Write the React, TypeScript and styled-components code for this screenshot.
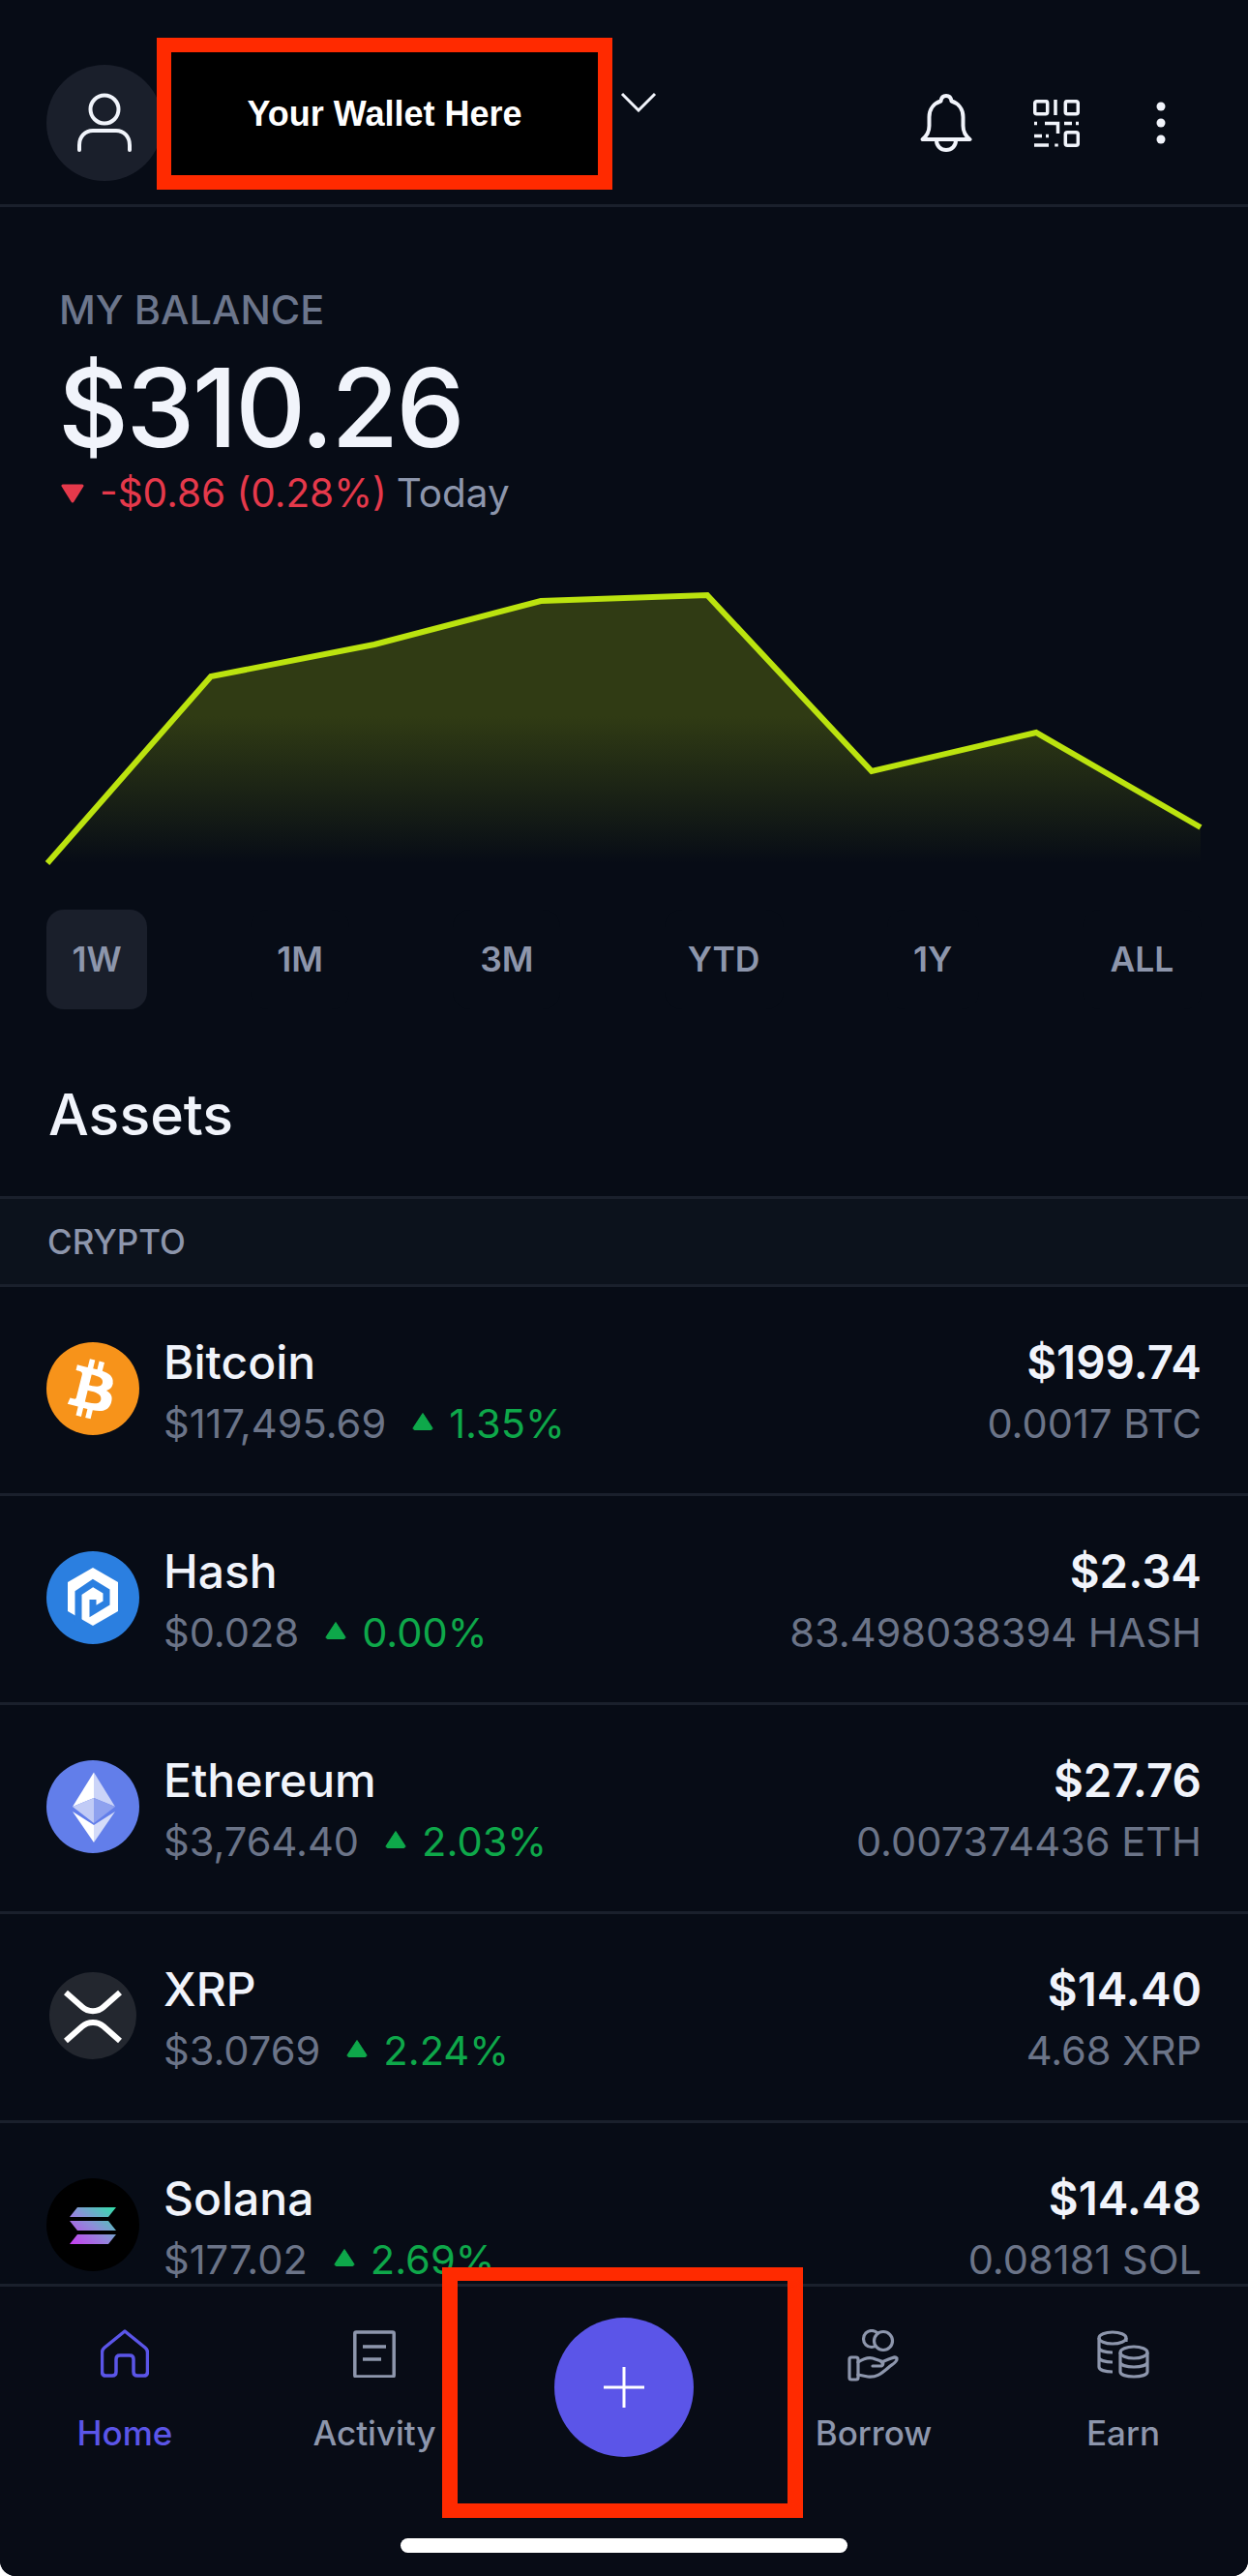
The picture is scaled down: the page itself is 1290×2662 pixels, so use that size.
import React from "react";
import styled, { createGlobalStyle } from "styled-components";

const Global = createGlobalStyle`
  html, body { margin: 0; padding: 0; background: #fff; }
  * { box-sizing: border-box; }
`;

const Screen = styled.div`
  position: relative;
  width: 1290px;
  height: 2662px;
  display: flex;
  flex-direction: column;
  overflow: hidden;
  background: #070c16;
  border-radius: 0 0 16px 16px;
  font-family: Inter, "Liberation Sans", sans-serif;
  color: #f1f4fb;
`;

const Header = styled.header`
  flex: none;
  height: 214px;
  padding: 67px 48px 0;
  display: flex;
  align-items: flex-start;
  border-bottom: 3px solid #1a202c;
`;

const Avatar = styled.div`
  width: 120px;
  height: 120px;
  border-radius: 50%;
  background: #1a1f2b;
  display: flex;
  align-items: center;
  justify-content: center;
  flex: none;
`;

const Chevron = styled.svg`
  margin: 27px 0 0 473px;
  flex: none;
`;

const HeaderActions = styled.div`
  margin-left: auto;
  display: flex;
  align-items: center;
  height: 120px;
`;

const ActionIcon = styled.span<{ $gap: number }>`
  display: flex;
  margin-right: ${(p) => p.$gap}px;
`;

const BalanceBlock = styled.section`
  flex: none;
  padding: 84px 48px 0 61px;
`;

const BalanceLabel = styled.div`
  font-size: 41.5px;
  line-height: 44px;
  font-weight: 500;
  color: #6c768c;
`;

const BalanceValue = styled.div`
  font-size: 113px;
  line-height: 118px;
  font-weight: 500;
  letter-spacing: -2.5px;
  margin: 20px 0 0 -1px;
`;

const DeltaRow = styled.div`
  display: flex;
  align-items: center;
  font-size: 40.5px;
  line-height: 46px;
  margin: 7px 0 0 2px;
  font-weight: 400;
`;

const DeltaValue = styled.span`
  color: #e5394b;
  margin-left: 16px;
`;

const DeltaToday = styled.span`
  color: #8d96ac;
  margin-left: 10px;
`;

const ChartWrap = styled.svg`
  display: block;
  flex: none;
`;

const Ranges = styled.nav`
  flex: none;
  display: flex;
  justify-content: space-between;
  padding: 0 48px;
  margin-top: 30px;
`;

const RangeTab = styled.div<{ $active?: boolean; $w: number }>`
  width: ${(p) => p.$w}px;
  height: 103px;
  border-radius: 18px;
  display: flex;
  align-items: center;
  justify-content: center;
  font-size: 35.5px;
  font-weight: 600;
  color: #8d96ac;
  background: ${(p) => (p.$active ? "#1a1f2b" : "#070c16")};
`;

const AssetsTitle = styled.h2`
  flex: none;
  margin: 0;
  height: 193px;
  padding: 75px 50px 0;
  font-size: 59px;
  line-height: 68px;
  font-weight: 500;
  color: #f1f4fb;
`;

const SectionBand = styled.div`
  flex: none;
  height: 94px;
  padding-left: 49px;
  display: flex;
  align-items: center;
  background: #0c121c;
  border-top: 3px solid #1a202c;
  border-bottom: 3px solid #1a202c;
  font-size: 35px;
  font-weight: 500;
  color: #8d96ac;
`;

const List = styled.div`
  flex: 1;
  min-height: 0;
  overflow: hidden;
`;

const Row = styled.div`
  height: 216px;
  padding: 0 48px 3px 48px;
  display: flex;
  align-items: center;
  border-bottom: 3px solid #1a202c;
`;

const CoinIcon = styled.div`
  width: 96px;
  height: 96px;
  flex: none;
  margin-right: 25px;
`;

const RowMain = styled.div`
  flex: 1;
  min-width: 0;
  padding-top: 6px;
`;

const RowRight = styled.div`
  text-align: right;
  padding-top: 6px;
`;

const CoinName = styled.div`
  font-size: 48px;
  line-height: 56px;
  font-weight: 500;
  color: #f1f4fb;
`;

const RowAmount = styled.div`
  font-size: 47.5px;
  line-height: 56px;
  font-weight: 600;
  color: #f1f4fb;
`;

const SubLine = styled.div`
  display: flex;
  align-items: center;
  font-size: 41.6px;
  line-height: 50px;
  margin-top: 10px;
  font-weight: 400;
  color: #6b7488;
`;

const SubRight = styled(SubLine)`
  justify-content: flex-end;
`;

const Pct = styled.span`
  color: #0ea84a;
`;

const UpTriangle = styled.svg`
  margin: -6px 16px 0 27px;
  flex: none;
`;

const Footer = styled.footer`
  flex: none;
  height: 302px;
  border-top: 3px solid #1a202c;
  background: #080c16;
  display: flex;
  flex-direction: column;
  align-items: center;
`;

const NavRow = styled.div`
  width: 1290px;
  display: grid;
  grid-template-columns: repeat(5, 258px);
`;

const NavItem = styled.div<{ $active?: boolean }>`
  height: 260px;
  display: flex;
  flex-direction: column;
  align-items: center;
  padding-top: 44px;
  font-size: 35px;
  line-height: 42px;
  font-weight: 500;
  color: ${(p) => (p.$active ? "#5b55e8" : "#8d96ac")};
`;

const NavIconSlot = styled.div`
  height: 54px;
  margin-bottom: 32px;
  display: flex;
  align-items: flex-start;
`;

const AddCell = styled.div`
  display: flex;
  justify-content: center;
  padding-top: 32px;
`;

const AddButton = styled.div`
  width: 144px;
  height: 144px;
  border-radius: 50%;
  background: #5b55e8;
  display: flex;
  align-items: center;
  justify-content: center;
`;

const HomeBar = styled.div`
  width: 462px;
  height: 15px;
  border-radius: 8px;
  background: #fff;
`;

const Redaction = styled.div`
  position: absolute;
  left: 162px;
  top: 39px;
  width: 471px;
  height: 157px;
  border: 15px solid #ff2a00;
  background: #000;
  color: #fff;
  display: flex;
  align-items: center;
  justify-content: center;
  font-family: "Liberation Sans", Arial, sans-serif;
  font-size: 36px;
  font-weight: 700;
`;

const RedFrame = styled.div`
  position: absolute;
  left: 457px;
  top: 2343px;
  width: 373px;
  height: 259px;
  border: solid #ff2a00;
  border-width: 14px 16px 15px 16px;
`;

const UserIcon = () => (
  <svg width="64" height="64" viewBox="0 0 64 64" fill="none" stroke="#f1f4fb" strokeWidth="4" strokeLinecap="round">
    <circle cx="32" cy="18" r="14.5" />
    <path d="M6 60v-5c0-9 6-15 14-15h24c8 0 14 6 14 15v5" />
  </svg>
);

const BellIcon = () => (
  <svg width="54" height="60" viewBox="0 0 54 60" fill="none" stroke="#f1f4fb" strokeWidth="4" strokeLinejoin="round" strokeLinecap="round">
    <path d="M2.5 47c5-4 7-8 7-14V24C9.5 15 15 9.5 21.5 7.5 22 3.500 24 2 27 2s5 1.500 5.500 5.500C39 9.500 44.500 15 44.500 24v9c0 6 2 10 7 14z" />
    <path d="M17 48c0 6 4.500 10 10 10s10-4 10-10" />
  </svg>
);

const QrIcon = () => (
  <svg width="48" height="49" viewBox="0 0 48 49" fill="none" stroke="#f1f4fb" strokeWidth="3.500">
    <rect x="1.700" y="1.700" width="13" height="13" rx="2" />
    <path d="M23 0v16" />
    <rect x="33.300" y="1.700" width="13" height="13" rx="2" />
    <path d="M1 24.500h3M12 24.500h13.500V35M32 24.500h8M44 24.500h3M1 37.500h8M13 37.500h3M1 47h15M24 45.500v3" />
    <rect x="33.300" y="33.700" width="13" height="13.500" rx="2" />
  </svg>
);

const DotsIcon = () => (
  <svg width="10" height="44" viewBox="0 0 10 44" fill="#f1f4fb">
    <circle cx="5" cy="5" r="4.500" />
    <circle cx="5" cy="22" r="4.500" />
    <circle cx="5" cy="39" r="4.500" />
  </svg>
);

const Up = () => (
  <UpTriangle width="22" height="19" viewBox="0 0 22 19">
    <path d="M11 1.500 20.500 16a1.500 1.500 0 0 1-1.300 2.500H2.800A1.500 1.500 0 0 1 1.500 16z" fill="#0ea84a" stroke="#0ea84a" strokeLinejoin="round" />
  </UpTriangle>
);

const BitcoinLogo = () => (
  <svg viewBox="0 0 96 96" width="96" height="96">
    <circle cx="48" cy="48" r="48" fill="#f7931a" />
    <path
      fill="#fff"
      d="M68.600 42.100c1-6.500-4-10-10.800-12.300l2.200-8.900-5.400-1.300-2.100 8.600-4.300-1 2.100-8.700-5.400-1.300-2.200 8.800-3.400-.8-7.400-1.900-1.400 5.800s4 .9 3.900 1c2.200.5 2.600 2 2.500 3.100l-2.500 10-3.500 14.100c-.3.700-1 1.700-2.500 1.300.1.100-3.900-1-3.900-1l-2.700 6.200 7 1.800 3.900 1-2.200 9 5.400 1.300 2.200-8.900 4.300 1.100-2.200 8.900 5.400 1.300 2.200-9c9.200 1.700 16.100 1 19-7.300 2.300-6.700-.1-10.500-4.900-13 3.500-.8 6.200-3.100 6.900-7.900zM56.300 59.400c-1.600 6.700-12.900 3.100-16.500 2.200l2.900-11.900c3.600.9 15.300 2.700 13.600 9.700zm1.700-17.400c-1.500 6.100-10.900 3-14 2.200l2.700-10.800c3 .8 12.900 2.200 11.300 8.600z"
    />
  </svg>
);

const HashLogo = () => (
  <svg viewBox="0 0 96 96" width="96" height="96">
    <circle cx="48" cy="48" r="48" fill="#2b7fe0" />
    <path fill="#fff" d="M48 17 74 32v30L48 77 22 62V32z" />
    <path fill="none" stroke="#2b7fe0" strokeWidth="7" d="M33 73V43l15-10 14 8.500v12L48 62V50" />
  </svg>
);

const EthLogo = () => (
  <svg viewBox="0 0 96 96" width="96" height="96">
    <circle cx="48" cy="48" r="48" fill="#627eea" />
    <path fill="#fff" d="M49 12.500V39L27 48z" />
    <path fill="#cbd4f8" d="M49 12.500V39l22 9z" />
    <path fill="#c1cbf6" d="M27 48l22-9v26z" />
    <path fill="#8ea1ef" d="M71 48 49 39v26z" />
    <path fill="#fff" d="M27 53l22 14v18z" />
    <path fill="#d5dcf9" d="M71 53 49 67v18z" />
  </svg>
);

const XrpLogo = () => (
  <svg viewBox="0 0 96 96" width="96" height="96">
    <circle cx="48" cy="48" r="45" fill="#23272f" />
    <path
      fill="none"
      stroke="#fff"
      strokeWidth="6"
      d="M20 24l17 15c6 5.500 16 5.500 22 0l17-15M20 74l17-15c6-5.500 16-5.500 22 0l17 15"
    />
  </svg>
);

const SolLogo = () => (
  <svg viewBox="0 0 96 96" width="96" height="96">
    <defs>
      <linearGradient id="sol" x1="0" y1="1" x2="1" y2="0">
        <stop offset="0" stopColor="#c83cf0" />
        <stop offset=".5" stopColor="#8c8fd8" />
        <stop offset="1" stopColor="#2fe0a8" />
      </linearGradient>
    </defs>
    <circle cx="48" cy="48" r="48" fill="#000" />
    <path fill="url(#sol)" d="M32 30h40l-8 10H24zM24 44h40l8 10H32zM32 58h40l-8 10H24z" />
  </svg>
);

const HomeIcon = () => (
  <svg width="50" height="51" viewBox="0 0 50 51" fill="none" stroke="#5b55e8" strokeWidth="3.500" strokeLinejoin="round">
    <path d="M25 2l21 17q2.500 2 2.500 5v20q0 4-4 4H38q-4 0-4-4V31q0-4-4-4H20q-4 0-4 4v13q0 4-4 4H5.500q-4 0-4-4V24q0-3 2.500-5z" />
  </svg>
);

const ActivityIcon = () => (
  <svg width="44" height="50" viewBox="0 0 44 50" fill="none" stroke="#8d96ac" strokeWidth="3.500">
    <rect x="1.800" y="3" width="40.400" height="46" rx="1.500" />
    <path d="M10 18h24M10 31h19" />
  </svg>
);

const BorrowIcon = () => (
  <svg width="54" height="54" viewBox="0 0 54 54" fill="none" stroke="#8d96ac" strokeWidth="3.200" strokeLinejoin="round" strokeLinecap="round">
    <circle cx="25" cy="10" r="8.500" />
    <circle cx="37" cy="12" r="9.500" fill="#080c16" />
    <rect x="2" y="29" width="9" height="23" rx="2" />
    <path d="M11 34c6-4 12-6 18-3l6 2c3 1 2 5-1 5h-8M11 47l10 2c8 1 13-2 22-10 2-2 9-5 8-9-2-3-7 1-16 4" />
  </svg>
);

const EarnIcon = () => (
  <svg width="54" height="51" viewBox="0 0 54 51" fill="none" stroke="#8d96ac" strokeWidth="3.200">
    <ellipse cx="16" cy="9" rx="14" ry="6" />
    <path d="M30 13V9M2 9v30c0 3 6 5 14 5M2 19c0 3 6 5 14 5M2 29c0 3 6 5 14 5" />
    <ellipse cx="38" cy="24" rx="14" ry="6" />
    <path d="M24 24v20c0 3 6 5 14 5s14-2 14-5V24M24 34c0 3 6 5 14 5s14-2 14-5" />
  </svg>
);

const coins = [
  { name: "Bitcoin", price: "$117,495.69", pct: "1.35%", amt: "$199.74", qty: "0.0017 BTC", Logo: BitcoinLogo },
  { name: "Hash", price: "$0.028", pct: "0.00%", amt: "$2.34", qty: "83.498038394 HASH", Logo: HashLogo },
  { name: "Ethereum", price: "$3,764.40", pct: "2.03%", amt: "$27.76", qty: "0.007374436 ETH", Logo: EthLogo },
  { name: "XRP", price: "$3.0769", pct: "2.24%", amt: "$14.40", qty: "4.68 XRP", Logo: XrpLogo },
  { name: "Solana", price: "$177.02", pct: "2.69%", amt: "$14.48", qty: "0.08181 SOL", Logo: SolLogo },
];

const ranges: [string, number][] = [
  ["1W", 104],
  ["1M", 102],
  ["3M", 111],
  ["YTD", 123],
  ["1Y", 95],
  ["ALL", 123],
];

const pts = "49,892 218,699 387,666 559,621 731,615 901,797 1071,757 1241,855";

export default function App() {
  return (
    <Screen>
      <Global />
      <Header>
        <Avatar>
          <UserIcon />
        </Avatar>
        <Chevron width="38" height="22" viewBox="0 0 38 22" fill="none" stroke="#f1f4fb" strokeWidth="3">
          <path d="M2 3l17 17L36 3" />
        </Chevron>
        <HeaderActions>
          <ActionIcon $gap={63}>
            <BellIcon />
          </ActionIcon>
          <ActionIcon $gap={79}>
            <QrIcon />
          </ActionIcon>
          <ActionIcon $gap={37}>
            <DotsIcon />
          </ActionIcon>
        </HeaderActions>
      </Header>
      <BalanceBlock>
        <BalanceLabel>MY BALANCE</BalanceLabel>
        <BalanceValue>$310.26</BalanceValue>
        <DeltaRow>
          <svg width="24" height="20" viewBox="0 0 24 20">
            <path d="M2 2h20L12 18z" fill="#e5394b" stroke="#e5394b" strokeWidth="3" strokeLinejoin="round" />
          </svg>
          <DeltaValue>-$0.86 (0.28%)</DeltaValue>
          <DeltaToday>Today</DeltaToday>
        </DeltaRow>
      </BalanceBlock>
      <ChartWrap width="1290" height="377" viewBox="0 533 1290 377">
        <defs>
          <linearGradient id="fill" gradientUnits="userSpaceOnUse" x1="0" y1="740" x2="0" y2="892">
            <stop offset="0" stopColor="#303b14" />
            <stop offset="1" stopColor="#070c16" />
          </linearGradient>
        </defs>
        <polygon points={`${pts} 1241,892 49,892`} fill="url(#fill)" />
        <polyline points={pts} fill="none" stroke="#bbe30f" strokeWidth="6" strokeLinejoin="miter" />
      </ChartWrap>
      <Ranges>
        {ranges.map(([label, w], i) => (
          <RangeTab key={label} $w={w} $active={i === 0}>
            {label}
          </RangeTab>
        ))}
      </Ranges>
      <AssetsTitle>Assets</AssetsTitle>
      <SectionBand>CRYPTO</SectionBand>
      <List>
        {coins.map(({ name, price, pct, amt, qty, Logo }) => (
          <Row key={name}>
            <CoinIcon>
              <Logo />
            </CoinIcon>
            <RowMain>
              <CoinName>{name}</CoinName>
              <SubLine>
                {price}
                <Up />
                <Pct>{pct}</Pct>
              </SubLine>
            </RowMain>
            <RowRight>
              <RowAmount>{amt}</RowAmount>
              <SubRight>{qty}</SubRight>
            </RowRight>
          </Row>
        ))}
      </List>
      <Footer>
        <NavRow>
          <NavItem $active>
            <NavIconSlot>
              <HomeIcon />
            </NavIconSlot>
            Home
          </NavItem>
          <NavItem>
            <NavIconSlot>
              <ActivityIcon />
            </NavIconSlot>
            Activity
          </NavItem>
          <AddCell>
            <AddButton>
              <svg width="42" height="42" viewBox="0 0 42 42" stroke="#fff" strokeWidth="3">
                <path d="M21 0v42M0 21h42" />
              </svg>
            </AddButton>
          </AddCell>
          <NavItem>
            <NavIconSlot>
              <BorrowIcon />
            </NavIconSlot>
            Borrow
          </NavItem>
          <NavItem>
            <NavIconSlot>
              <EarnIcon />
            </NavIconSlot>
            Earn
          </NavItem>
        </NavRow>
        <HomeBar />
      </Footer>
      <Redaction>Your Wallet Here</Redaction>
      <RedFrame />
    </Screen>
  );
}
